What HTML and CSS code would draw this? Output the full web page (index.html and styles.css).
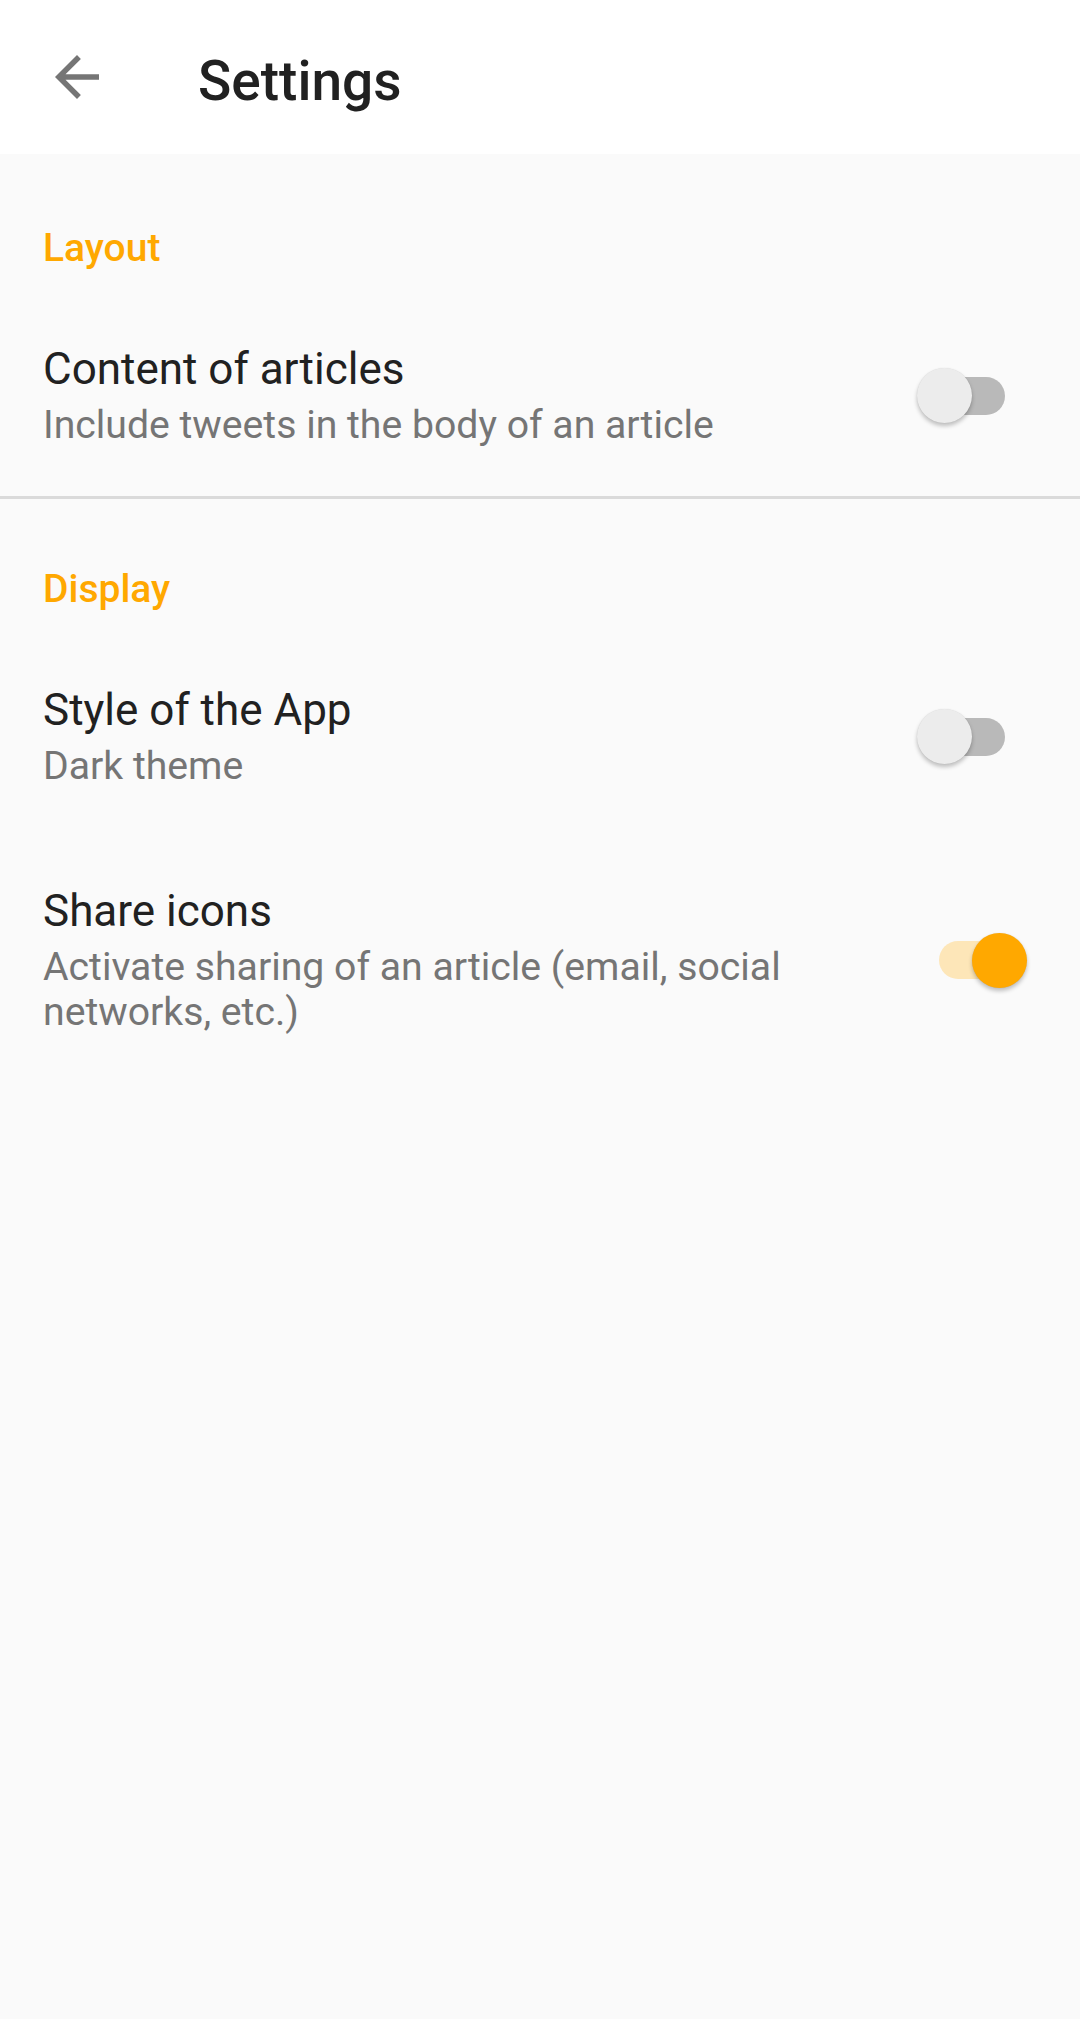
FILE: index.html
```html
<!DOCTYPE html>
<html lang="en">
<head>
<meta charset="utf-8">
<title>Settings</title>
<link rel="stylesheet" href="styles.css">
</head>
<body>
<header class="toolbar">
  <svg class="back" viewBox="0 0 24 24" aria-label="Back"><path d="M20 11H7.83l5.59-5.59L12 4l-8 8 8 8 1.41-1.41L7.83 13H20v-2z"/></svg>
  <h1 class="title">Settings</h1>
</header>
<main class="content">
  <section class="group">
    <h2 class="category">Layout</h2>
    <div class="pref">
      <div class="pref-text">
        <div class="pref-title">Content of articles</div>
        <div class="pref-summary">Include tweets in the body of an article</div>
      </div>
      <div class="switch"><span class="thumb"></span></div>
    </div>
  </section>
  <section class="group group-divided">
    <h2 class="category">Display</h2>
    <div class="pref">
      <div class="pref-text">
        <div class="pref-title">Style of the App</div>
        <div class="pref-summary">Dark theme</div>
      </div>
      <div class="switch"><span class="thumb"></span></div>
    </div>
    <div class="pref pref-on">
      <div class="pref-text">
        <div class="pref-title">Share icons</div>
        <div class="pref-summary">Activate sharing of an article (email, social networks, etc.)</div>
      </div>
      <div class="switch switch-on"><span class="thumb"></span></div>
    </div>
  </section>
</main>
</body>
</html>
```
FILE: styles.css
```css
html, body {
  margin: 0;
  padding: 0;
}
body {
  background: #fafafa;
  font-family: Roboto, "Noto Sans", sans-serif;
  min-height: 2019px;
}
.toolbar {
  height: 154px;
  background: #ffffff;
  display: flex;
  align-items: center;
  padding-left: 44px;
  box-sizing: border-box;
}
.back {
  width: 66px;
  height: 66px;
  fill: #757575;
  flex: none;
}
.title {
  margin: 0 0 0 88px;
  padding-top: 7px;
  font-size: 55px;
  line-height: 64px;
  font-weight: 500;
  color: #212121;
}
.group-divided {
  border-top: 3px solid #dadada;
}
.category {
  margin: 0;
  padding: 68px 43px 21px;
  font-size: 39px;
  line-height: 52px;
  font-weight: 500;
  color: #ffa800;
}
.group-divided .category {
  padding-top: 64px;
}
.pref {
  display: flex;
  align-items: center;
  padding: 48px 75px 48px 43px;
}
.pref-on {
  padding-right: 56px;
}
.pref-text {
  flex: 1;
  min-width: 0;
  padding-right: 60px;
}
.pref-title {
  font-size: 44px;
  line-height: 52px;
  color: #212121;
}
.pref-summary {
  margin-top: 8px;
  font-size: 39.2px;
  line-height: 45px;
  color: #757575;
}
.switch {
  position: relative;
  flex: none;
  width: 85px;
  height: 38px;
  border-radius: 19px;
  background: #b9b9b9;
  margin-left: 32px;
}
.thumb {
  position: absolute;
  top: -8.5px;
  left: -3px;
  width: 55px;
  height: 55px;
  border-radius: 50%;
  background: #ececec;
  box-shadow: 0 3px 4px rgba(0, 0, 0, 0.24), 0 0 1px rgba(0, 0, 0, 0.12);
}
.switch-on {
  background: #fde6b8;
}
.switch-on .thumb {
  left: 33px;
  background: #ffa800;
}
```
